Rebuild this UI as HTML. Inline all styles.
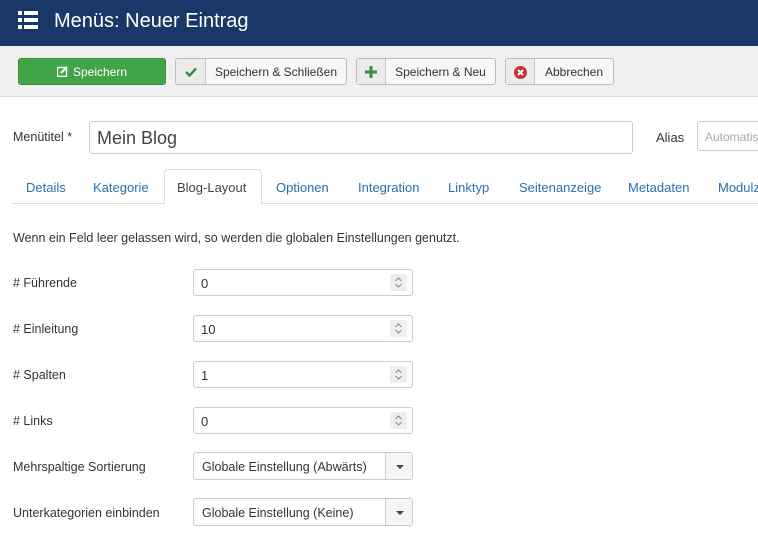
<!DOCTYPE html>
<html><head><meta charset="utf-8"><style>
*{box-sizing:border-box;margin:0;padding:0}
body{width:758px;height:560px;overflow:hidden;background:#fff;font-family:"Liberation Sans",sans-serif;font-size:13px;color:#333;position:relative}
.hdr{position:absolute;left:0;top:0;width:758px;height:46px;background:#1a3867}
.hdr .t{position:absolute;left:54px;top:10px;color:#fff;font-size:20px}
.tb{position:absolute;left:0;top:46px;width:758px;height:51px;background:#f0f0f0;border-bottom:1px solid #dcdcdc}
.btn{position:absolute;top:12px;height:27px;border:1px solid #bcbcbc;border-radius:3px;background:#f7f7f7;font-size:12px;line-height:27px;color:#333}
.btn .ic{position:absolute;left:0;top:0;bottom:0;border-right:1px solid #c8c8c8;background:#ebebeb;text-align:center}
.btn .tx{position:absolute;top:0;bottom:0;right:0;text-align:center}
.abs{position:absolute}
.inp{position:absolute;border:1px solid #ccc;border-radius:3px;background:#fff}
.tabs a{position:absolute;top:180px;color:#2a6fb0;font-size:13px}
.lbl{position:absolute;left:13px;font-size:12.5px}
.num{position:absolute;left:193px;width:220px;height:27px;border:1px solid #ccc;border-radius:3px;font-size:13px;padding:6px 0 0 7px}
.num .sp{position:absolute;right:5px;top:4px;width:17px;height:17px;background:#eee;border-radius:2px}
.sel{position:absolute;left:193px;width:220px;height:28px;border:1px solid #ccc;border-radius:3px;font-size:12.5px;padding:7px 0 0 8px}
.sel .ar{position:absolute;right:0;top:0;bottom:0;width:27px;border-left:1px solid #ccc;background:#f5f5f5}
.sel .ar:after{content:"";position:absolute;left:10px;top:12px;border:4px solid transparent;border-top:4px solid #444;border-bottom:0}
</style></head><body>
<div class="hdr">
<svg class="abs" style="left:18px;top:11px" width="20" height="18"><g fill="#fff"><rect x="0" y="0" width="4" height="4"/><rect x="6" y="0" width="14" height="4"/><rect x="0" y="7" width="4" height="4"/><rect x="6" y="7" width="14" height="4"/><rect x="0" y="14" width="4" height="4"/><rect x="6" y="14" width="14" height="4"/></g></svg>
<div class="t">Menüs: Neuer Eintrag</div></div>
<div class="tb">
<div class="btn" style="left:18px;width:148px;background:#41a447;border-color:#3a8f3e;color:#fff;text-align:center">
<svg style="vertical-align:-1px;margin-right:5px" width="11" height="11"><rect x="0.5" y="1.5" width="9" height="9" fill="none" stroke="#fff" stroke-width="1.5"/><path d="M4 7 L10 1" stroke="#fff" stroke-width="2"/></svg>Speichern</div>
<div class="btn" style="left:175px;width:172px"><div class="ic" style="width:30px"><svg style="margin-top:8px" width="12" height="10"><path d="M1 5L4.5 8.5L11 1.5" fill="none" stroke="#3a8f3e" stroke-width="2.5"/></svg></div><div class="tx" style="left:30px">Speichern &amp; Schließen</div></div>
<div class="btn" style="left:356px;width:140px"><div class="ic" style="width:29px"><svg style="margin-top:7px" width="12" height="12"><path d="M6 0V12M0 6H12" stroke="#3a8f3e" stroke-width="3"/></svg></div><div class="tx" style="left:29px">Speichern &amp; Neu</div></div>
<div class="btn" style="left:505px;width:109px"><div class="ic" style="width:29px"><svg style="margin-top:7px" width="13" height="13"><circle cx="6.5" cy="6.5" r="6.5" fill="#bd362f"/><path d="M4 4L9 9M9 4L4 9" stroke="#fff" stroke-width="2"/></svg></div><div class="tx" style="left:29px">Abbrechen</div></div>
</div>
<div class="lbl" style="top:130px">Menütitel *</div>
<div class="inp" style="left:89px;top:121px;width:544px;height:33px;font-size:18px;padding:6px 0 0 7px;color:#444">Mein Blog</div>
<div class="abs" style="left:656px;top:130px">Alias</div>
<div class="inp" style="left:697px;top:121px;width:70px;height:30px;color:#aaa;font-size:12px;padding:8px 0 0 7px">Automatis</div>
<div class="abs" style="left:12px;top:203px;width:746px;border-top:1px solid #ddd"></div>
<div class="abs" style="left:164px;top:169px;width:98px;height:36px;border:1px solid #ddd;border-bottom:1px solid #fff;border-radius:4px 4px 0 0;background:#fff"></div>
<div class="tabs">
<a style="left:26px">Details</a><a style="left:93px">Kategorie</a><a style="left:177px;color:#444">Blog-Layout</a><a style="left:276px">Optionen</a><a style="left:358px">Integration</a><a style="left:448px">Linktyp</a><a style="left:519px">Seitenanzeige</a><a style="left:628px">Metadaten</a><a style="left:718px">Modulz</a>
</div>
<div class="abs" style="left:13px;top:231px;font-size:12.5px">Wenn ein Feld leer gelassen wird, so werden die globalen Einstellungen genutzt.</div>
<div class="lbl" style="top:276px"># Führende</div><div class="num" style="top:269px">0<div class="sp"><svg width="17" height="17"><path d="M5.5 7L8.5 4L11.5 7M5.5 10L8.5 13L11.5 10" fill="none" stroke="#888"/></svg></div></div>
<div class="lbl" style="top:322px"># Einleitung</div><div class="num" style="top:315px">10<div class="sp"><svg width="17" height="17"><path d="M5.5 7L8.5 4L11.5 7M5.5 10L8.5 13L11.5 10" fill="none" stroke="#888"/></svg></div></div>
<div class="lbl" style="top:368px"># Spalten</div><div class="num" style="top:361px">1<div class="sp"><svg width="17" height="17"><path d="M5.5 7L8.5 4L11.5 7M5.5 10L8.5 13L11.5 10" fill="none" stroke="#888"/></svg></div></div>
<div class="lbl" style="top:414px"># Links</div><div class="num" style="top:407px">0<div class="sp"><svg width="17" height="17"><path d="M5.5 7L8.5 4L11.5 7M5.5 10L8.5 13L11.5 10" fill="none" stroke="#888"/></svg></div></div>
<div class="lbl" style="top:460px">Mehrspaltige Sortierung</div><div class="sel" style="top:452px">Globale Einstellung (Abwärts)<div class="ar"></div></div>
<div class="lbl" style="top:506px">Unterkategorien einbinden</div><div class="sel" style="top:498px">Globale Einstellung (Keine)<div class="ar"></div></div>
</body></html>
